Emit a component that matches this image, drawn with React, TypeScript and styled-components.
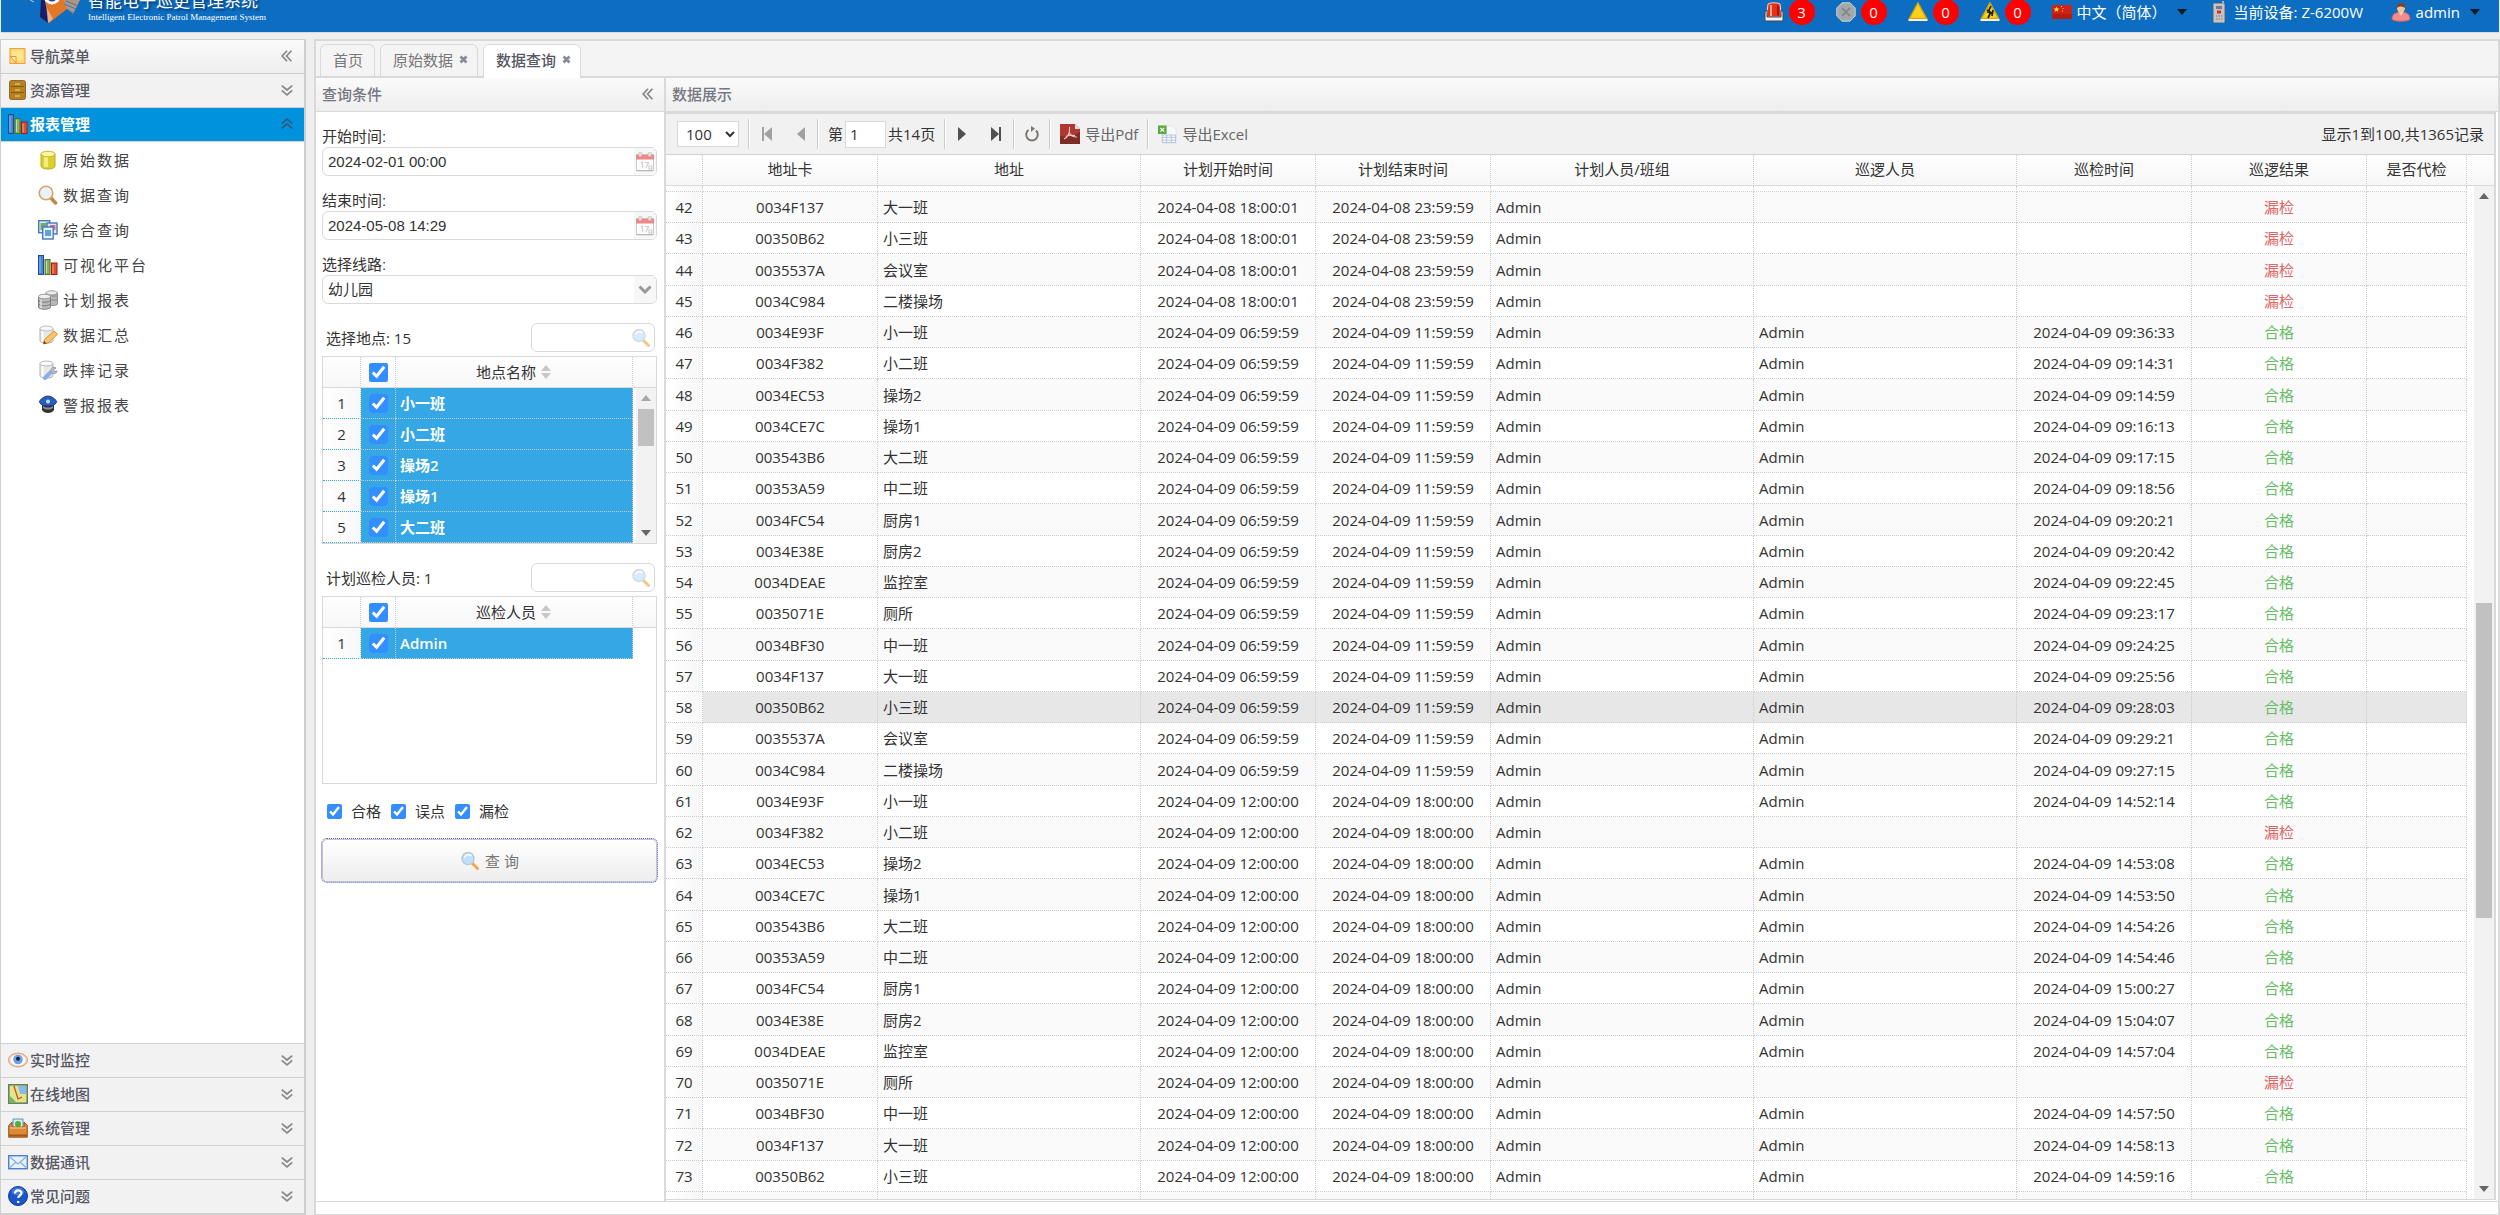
import React from 'react';
import styled, { createGlobalStyle, css } from 'styled-components';

const line = '#d9d9d9';
const dotted = '1px dotted #cccccc';

const Global = createGlobalStyle`
  * { box-sizing: border-box; }
  html, body, #root { height: 100%; margin: 0; }
  body, button, input, select, table {
    font-family: "Open Sans", "Noto Sans CJK SC", sans-serif;
    font-size: 15px;
    line-height: 20px;
    color: #333333;
  }
  body { overflow: hidden; background: #efefef; }
  button { padding: 0; border: 0; background: none; cursor: pointer; }
  svg { display: block; flex: none; }
`;

/* ---------- icons ---------- */

type IconProps = { size?: number };

const Svg = ({ size = 20, children }: IconProps & { children: React.ReactNode }) => (
  <svg width={size} height={size} viewBox="0 0 20 20" fill="none" aria-hidden="true">{children}</svg>
);

const NoteIcon = () => (
  <Svg>
    <rect x="2" y="2.500" width="15" height="15" fill="#fbd878" stroke="#f0a040" />
    <path d="M4 4.500h11v10H9L4 9z" fill="#fde68c" />
    <path d="M2.500 10.500h5.500v6.500z" fill="#fff3c4" stroke="#f09030" />
  </Svg>
);
const CabinetIcon = () => (
  <Svg>
    <rect x="1.500" y="0.500" width="16" height="19" rx="2" fill="#b9801e" stroke="#8a6a3a" />
    <path d="M3 6.500h13M3 12.500h13" stroke="#8a5a10" />
    <path d="M7 4h5M7 10h5M7 16h5" stroke="#e0b860" strokeWidth="1.500" />
  </Svg>
);
const BarsIcon = () => (
  <Svg>
    <rect x="0.500" y="0.500" width="5" height="19" fill="#4a86d0" stroke="#1e4c96" />
    <rect x="7" y="4.500" width="5" height="15" fill="#8cb060" stroke="#4c7424" />
    <rect x="13.500" y="8" width="5.500" height="11.500" fill="#e05030" stroke="#a41c10" />
    <path d="M2 2v16" stroke="#8ab8f0" /><path d="M8.500 6v12" stroke="#c4dc9c" /><path d="M15 9.500v9" stroke="#f4a080" />
  </Svg>
);
const CylinderIcon = () => (
  <Svg>
    <path d="M3 4v12c0 4 14 4 14 0V4z" fill="#dcd02c" stroke="#b8ac20" />
    <path d="M6 6h4v11H6z" fill="#f2ec80" />
    <ellipse cx="10" cy="4" rx="7" ry="2.800" fill="#f8f4a8" stroke="#c4b830" />
  </Svg>
);
const BrownGlassIcon = () => (
  <Svg>
    <path d="M12 12l5.500 6" stroke="#c08848" strokeWidth="3.500" strokeLinecap="round" />
    <circle cx="8" cy="8" r="6.800" fill="#e8f2fc" stroke="#d8a468" strokeWidth="1.600" />
  </Svg>
);
const WindowsIcon = () => (
  <Svg>
    <rect x="0.700" y="0.700" width="11" height="12" fill="#dce8f8" stroke="#4c78b8" strokeWidth="1.400" />
    <rect x="2.500" y="3" width="6" height="7" fill="#6cae60" />
    <rect x="9" y="3" width="10" height="11" fill="#dce8f8" stroke="#4c78b8" strokeWidth="1.400" />
    <rect x="12" y="5" width="5.500" height="5" fill="#d87078" />
    <rect x="4.700" y="7" width="10.500" height="12" fill="#e8f2fc" stroke="#4c78b8" strokeWidth="1.400" />
    <rect x="7" y="10" width="6" height="6" fill="#58a4dc" />
  </Svg>
);
const ServersIcon = () => (
  <Svg>
    <path d="M8 3v11c0 2 11.500 2 11.500 0V3z" fill="#b8b8b8" stroke="#909090" />
    <ellipse cx="13.700" cy="2.800" rx="5.700" ry="2" fill="#ececec" stroke="#a0a0a0" />
    <path d="M13 6h6M13 10h6" stroke="#888888" />
    <path d="M0.500 7v10c0 3 12 3 12 0V7z" fill="#bcbcbc" stroke="#808080" />
    <ellipse cx="6.500" cy="6.500" rx="6" ry="2.300" fill="#f0f0f0" stroke="#999999" />
    <path d="M.5 10c0 3 12 3 12 0M.5 13.500c0 3 12 3 12 0" stroke="#777777" />
    <path d="M3 10v8" stroke="#ffffff" />
  </Svg>
);
const PaleCylinder = () => (
  <>
    <path d="M2 3.500v12c0 3.500 13 3.500 13 0v-12z" fill="#e8e8e8" stroke="#b0b0b0" />
    <path d="M4.500 5v12" stroke="#ffffff" strokeWidth="2" />
    <ellipse cx="8.500" cy="3.500" rx="6.500" ry="2.500" fill="#f8f8f8" stroke="#bbbbbb" />
  </>
);
const PencilIcon = () => (
  <Svg>
    <PaleCylinder />
    <path d="M5.500 19l1-4.500L16 6l3.500 3.200L10 18z" fill="#f8c868" stroke="#d89030" />
    <path d="M5.500 19l.6-3 2.500 2.400z" fill="#604020" />
  </Svg>
);
const WrenchIcon = () => (
  <Svg>
    <PaleCylinder />
    <path d="M7 18l6-6" stroke="#8ab0e8" strokeWidth="4" strokeLinecap="round" />
    <path d="M13 12c-1-4 3-6 5-4l-2.500 1.500 1 2L19 11c-.5 3-3.500 3.500-6 1z" fill="#b8c0c8" stroke="#9098a0" />
  </Svg>
);
const PoliceIcon = () => (
  <Svg>
    <path d="M4 10h12v5c-2 4-10 4-12 0z" fill="#303030" />
    <path d="M5 11c2 2 8 2 10 0v2c-3 2-7 2-10 0z" fill="#909090" />
    <path d="M10 1c4 .5 8 3 8.500 6-1 3-4 4-8.500 4S2.500 10 1.500 7C2 4 6 1.500 10 1z" fill="#2c5cb8" stroke="#1c3c88" />
    <circle cx="10" cy="6.500" r="2" fill="#b8e0ff" />
  </Svg>
);
const EyeIcon = () => (
  <Svg>
    <ellipse cx="10" cy="10" rx="9.500" ry="7" fill="#f2d4bc" stroke="#d8a078" />
    <ellipse cx="10" cy="10" rx="7.500" ry="5.200" fill="#ffffff" />
    <circle cx="10" cy="9.500" r="4.800" fill="#6ca0e8" />
    <circle cx="10" cy="8.800" r="2" fill="#102040" />
  </Svg>
);
const MapIcon = () => (
  <Svg>
    <rect x="0.800" y="0.800" width="18.400" height="18.400" fill="#d8e890" stroke="#60785c" strokeWidth="1.500" />
    <path d="M10 2h8v8h-6z" fill="#88b8f0" /><path d="M2 12l6 6H2z" fill="#70b850" />
    <path d="M4 3l8 14 6-6M2 8l8 1 5 9" stroke="#f0e070" strokeWidth="1.500" />
    <path d="M6 2l4 13 4-2" stroke="#d04030" strokeWidth="1.200" />
  </Svg>
);
const ToolboxIcon = () => (
  <Svg>
    <path d="M5 1h10v9H5z" fill="#d0e8f8" stroke="#6890b0" /><circle cx="10" cy="6" r="3" fill="#50b030" />
    <path d="M.7 7.500L4 4v5h12V4l3.300 3.500v11.700H.7z" fill="#e08838" stroke="#94541c" />
    <path d="M2 10h16" stroke="#f4b878" strokeWidth="1.500" /><path d="M1 17.500h18" stroke="#a05818" strokeWidth="2" />
  </Svg>
);
const MailIcon = () => (
  <Svg>
    <rect x="0.700" y="3.700" width="18.600" height="13" fill="#e8f2fc" stroke="#4c80c8" strokeWidth="1.400" />
    <path d="M2 5l8 7 8-7M2 15.500l5.500-5M18 15.500l-5.500-5" stroke="#88b0e0" strokeWidth="1.300" />
  </Svg>
);
const HelpIcon = () => (
  <Svg>
    <circle cx="10" cy="10" r="9.500" fill="#1a56c8" stroke="#0c389c" />
    <ellipse cx="10" cy="5.500" rx="6.500" ry="4" fill="#5a90e8" opacity=".6" />
    <path d="M7 7.500c0-4 6.500-4 6.500-.5 0 2.500-3.300 2.500-3.300 5M10.200 15v2" stroke="#ffffff" strokeWidth="2.200" />
  </Svg>
);
const GlassIcon = () => (
  <Svg>
    <path d="M12 12l5.500 5.500" stroke="#eda850" strokeWidth="3" strokeLinecap="round" />
    <circle cx="8" cy="7.500" r="6" fill="#bfe0fa" stroke="#c0c8d4" strokeWidth="1.500" />
    <path d="M4.500 6.500c1-3 5-3.500 7-1.500" stroke="#ffffff" strokeWidth="1.500" />
  </Svg>
);
const CalendarIcon = () => (
  <Svg>
    <rect x="1.500" y="3" width="17" height="16" rx="1" fill="#fbfbfb" stroke="#cccccc" />
    <path d="M1 2.500h18v5H1z" fill="#f08888" />
    <rect x="3.500" y="0.500" width="3.500" height="4" rx="1.500" fill="#e4e4e4" stroke="#b8b8b8" strokeWidth=".7" />
    <rect x="13" y="0.500" width="3.500" height="4" rx="1.500" fill="#e4e4e4" stroke="#b8b8b8" strokeWidth=".7" />
    <path d="M6 11l1.500-1v6M9.500 10.500h4L11 16M14 14h3v3h-3z" stroke="#cfcfcf" strokeWidth="1.100" />
    <path d="M1.500 18.500h17" stroke="#b8b8b8" />
  </Svg>
);
const SirenIcon = () => (
  <Svg>
    <path d="M4 2C6 .4 14 .4 16 2l1.500 13h-15z" fill="#e83018" stroke="#f0d8d0" />
    <path d="M7 3v11" stroke="#ffa890" strokeWidth="2" /><path d="M14 3.500v10" stroke="#a81408" strokeWidth="2" />
    <path d="M1 10l2-2v7h14V8l2 2v9H1z" fill="#f4f4f4" stroke="#404850" />
  </Svg>
);
const OctagonIcon = () => (
  <Svg>
    <path d="M6 .8h8L19.200 6v8L14 19.200H6L.8 14V6z" fill="#a4a8a8" stroke="#d0d4d4" />
    <path d="M6 6l8 8M14 6l-8 8" stroke="#84888c" strokeWidth="1.800" />
  </Svg>
);
const WarnIcon = ({ spark }: { spark?: boolean }) => (
  <Svg>
    <path d="M10 1l8.500 15.500h-17z" fill="#fcd01c" stroke="#d8a808" strokeWidth="1.500" />
    <path d="M.5 17h19v2H.5z" fill="#f4f0dc" />
    {spark && <path d="M11 4l-3 6 2.500 1L8 16M7 8l6 4M13 8l-1 6" stroke="#202020" strokeWidth="1.700" />}
  </Svg>
);
const FlagIcon = () => (
  <svg width="20" height="14" viewBox="0 0 20 14" aria-hidden="true">
    <rect width="20" height="14" fill="#cc2218" /><rect y="9" width="20" height="5" fill="#b41c12" />
    <path d="M4.500 1.500l.8 2 2.200.1-1.700 1.300.6 2.100-1.900-1.200L2.600 7l.6-2.100L1.500 3.600l2.200-.1z" fill="#ffd830" />
    <path d="M9 1h1v1H9zM10.500 3h1v1h-1zM10 5.500h1v1h-1z" fill="#ffd830" />
  </svg>
);
const PhoneIcon = () => (
  <svg width="12" height="22" viewBox="0 0 12 22" aria-hidden="true">
    <path d="M9 0h2v4H9z" fill="#b8b0b0" />
    <rect x=".5" y="2.500" width="11" height="19" rx="1" fill="#c8c4c4" stroke="#989494" />
    <rect x="3" y="5" width="6" height="3" fill="#707c88" />
    <rect x="4" y="9.500" width="4" height="3" fill="#e02828" />
    <path d="M3 15h1.500M5.500 15H7M8 15h1.500M3 18h1.500M5.500 18H7M8 18h1.500" stroke="#807c7c" />
  </svg>
);
const UserIcon = () => (
  <Svg>
    <path d="M1 17c0-5 4-7 9-7s9 2 9 7c0 3-18 3-18 0z" fill="#f08c90" stroke="#d06068" />
    <path d="M7 9h6l-3 5z" fill="#f8d0a8" />
    <circle cx="10" cy="6" r="4" fill="#f4c494" />
    <path d="M5.700 6C5 0 15-1 14.300 6 12 5 10 3 5.700 6z" fill="#7c4424" />
  </Svg>
);
const PdfIcon = () => (
  <Svg>
    <path d="M0 0h15l5 5v15H0z" fill="#b0382e" /><path d="M0 12c8 2 14 0 20-4v12H0z" fill="#7c2c24" />
    <path d="M15 0v5h5z" fill="#e8dcdc" />
    <path d="M4 15c4-2 6-7 5.500-12M9.500 9c1 2.500 4 4 7.500 4M6 12.500c3-1.500 6-1.500 9-1" stroke="#ecc8c4" strokeWidth="1.100" />
  </Svg>
);
const ExcelIcon = () => (
  <Svg size={19}>
    <path d="M9 1h6l4 4v14H5V9h4z" fill="#f8f9fb" stroke="#e2e6ea" />
    <rect x="0" y="0.500" width="9" height="9" fill="#5ca83c" />
    <path d="M2.500 3l4 4M6.500 3l-4 4" stroke="#ffffff" strokeWidth="1.300" />
    <path d="M4.500 10.500h14v8h-14zM4.500 13h14M4.500 16h14M9 10.500v8M14 10.500v8" stroke="#b4c4d8" />
  </Svg>
);
const RefreshIcon = () => (
  <svg width="16" height="16" viewBox="0 0 16 16" fill="none" aria-hidden="true">
    <path d="M4.500 4A5.800 5.800 0 1 0 12 4.500" stroke="#807470" strokeWidth="2" />
    <path d="M7 0v6l4-3.500z" fill="#807470" />
  </svg>
);
const ChevronsIcon = ({ dir, color = '#888888' }: { dir: 'left' | 'down' | 'up'; color?: string }) => {
  const paths = {
    left: 'M8 2L2.500 8 8 14M13 2L7.500 8 13 14',
    down: 'M2 3l6 5 6-5M2 8.500l6 5 6-5',
    up: 'M2 7.500l6-5 6 5M2 13l6-5 6 5',
  };
  return (
    <svg width="14" height="14" viewBox="0 0 16 16" fill="none" aria-hidden="true">
      <path d={paths[dir]} stroke={color} strokeWidth="2" />
    </svg>
  );
};
const Triangle = ({ up, color = '#666666' }: { up?: boolean; color?: string }) => (
  <svg width="10" height="6" viewBox="0 0 10 6" aria-hidden="true">
    <path d={up ? 'M0 6L5 0l5 6z' : 'M0 0h10L5 6z'} fill={color} />
  </svg>
);
const PageArrow = ({ dir, bar, color }: { dir: 'left' | 'right'; bar?: boolean; color: string }) => (
  <svg width="12" height="14" viewBox="0 0 12 14" aria-hidden="true">
    {dir === 'left' ? <path d="M11 0v14L3 7z" fill={color} /> : <path d="M1 0v14l8-7z" fill={color} />}
    {bar && <rect x={dir === 'left' ? 1 : 9} y="0" width="2" height="14" fill={color} />}
  </svg>
);
const SortIcon = () => (
  <svg width="12" height="14" viewBox="0 0 12 14" aria-hidden="true">
    <path d="M1 6l5-6 5 6zM1 8h10l-5 6z" fill="#c8c8c8" />
  </svg>
);
const CloseIcon = () => (
  <svg width="9" height="9" viewBox="0 0 9 9" aria-hidden="true">
    <path d="M1.500 1.500l6 6M7.500 1.500l-6 6" stroke="#888c98" strokeWidth="2.800" />
  </svg>
);
const LogoIcon = () => (
  <svg width="58" height="24" viewBox="0 0 58 24" aria-hidden="true">
    <path d="M17 0h4l3 23-8-6z" fill="#1c1c68" />
    <path d="M21 0h24l3 5-23 18z" fill="#e07828" />
    <path d="M23 8l1 15 5-4z" fill="#f4b080" />
    <path d="M40 0l16 0-7 14-7-6z" fill="#b09480" />
    <path d="M42 1l12 5M40 4l12 5M44 10l5 3" stroke="#3a7cc0" />
    <circle cx="28" cy="-4" r="7" fill="#3c3c8c" stroke="#ffffff" strokeWidth="3" />
    <path d="M6 0l4 2" stroke="#b8d0e8" />
  </svg>
);

/* ---------- shell ---------- */

const Shell = styled.div`
  display: flex;
  flex-direction: column;
  height: 100vh;
  min-width: 1280px;
`;
const TopBar = styled.header`
  display: flex;
  justify-content: space-between;
  height: 33px;
  flex: none;
  margin: 0 1px 6px;
  padding: 0 19px 0 23px;
  overflow: hidden;
  background: #0d6dc1;
  border-bottom: 1px solid ${line};
  color: #ffffff;
`;
const Brand = styled.div`
  display: flex;
  align-items: flex-start;
  gap: 6px;
`;
const BrandText = styled.div`
  display: flex;
  flex-direction: column;
  justify-content: flex-end;
  height: 23px;
`;
const BrandTitle = styled.strong`
  font-size: 17px;
  line-height: 20px;
  font-weight: 400;
  text-shadow: 2px 2px 2px #0a3c70;
`;
const BrandSub = styled.span`
  font-family: "Liberation Serif", serif;
  font-size: 9px;
  line-height: 12px;
`;
const Status = styled.div`
  display: flex;
  align-items: center;
  gap: 21px;
  height: 24px;
`;
const StatusButton = styled.button<{ $gap: number; $lead?: number; $width?: number }>`
  display: flex;
  align-items: center;
  gap: ${p => p.$gap}px;
  min-width: ${p => p.$width ?? 0}px;
  margin-left: ${p => p.$lead ?? 0}px;
  color: #ffffff;
  white-space: nowrap;
`;
const CountBadge = styled.span`
  width: 26px;
  height: 26px;
  border-radius: 13px;
  background: #ff0000;
  line-height: 26px;
  text-align: center;
`;
const Body = styled.div`
  display: flex;
  flex: 1;
  min-height: 0;
  gap: 8px;
`;

/* ---------- navigation ---------- */

const Nav = styled.nav`
  display: flex;
  flex-direction: column;
  width: 306px;
  flex: none;
  border: 1px solid #cfcfcf;
  border-right-width: 2px;
  background: #ffffff;
`;
const navLine = css`
  display: flex;
  align-items: center;
  gap: 2px;
  width: 100%;
  height: 34px;
  flex: none;
  padding: 0 10px 2px 7px;
  border-bottom: 1px solid #cfcfcf;
  color: #575765;
  font-weight: 500;
  text-align: left;
`;
const NavTitle = styled.div`
  ${navLine}
  background: linear-gradient(#fafafa, #eeeeee);
`;
const NavSection = styled.button<{ $open?: boolean }>`
  ${navLine}
  background: ${p => (p.$open ? '#0092dc' : '#f2f2f2')};
  ${p => p.$open && css`color: #ffffff; font-weight: 700;`}
`;
const Grow = styled.span`
  flex: 1;
`;
const NavList = styled.ul`
  flex: 1;
  margin: 0;
  padding: 0;
  border-bottom: 1px solid #cfcfcf;
  list-style: none;
`;
const NavLink = styled.a`
  display: flex;
  align-items: center;
  gap: 5px;
  height: 35px;
  padding-left: 37px;
  color: #444444;
  letter-spacing: 2px;
  text-decoration: none;
`;

/* ---------- workspace ---------- */

const Workspace = styled.main`
  display: flex;
  flex-direction: column;
  flex: 1;
  min-width: 0;
  padding-bottom: 12px;
  border: 2px solid ${line};
  border-bottom-width: 1px;
  background: #ffffff;
`;
const TabBar = styled.div`
  display: flex;
  align-items: flex-start;
  gap: 5px;
  height: 37px;
  flex: none;
  padding: 3px 4px 0;
  border-bottom: 2px solid ${line};
  background: #f4f4f4;
`;
const Tab = styled.div<{ $active?: boolean }>`
  display: flex;
  align-items: center;
  gap: 4px;
  height: ${p => (p.$active ? 34 : 32)}px;
  padding: 0 9px ${p => (p.$active ? 4 : 2)}px 11px;
  border: 1px solid ${line};
  border-bottom: 0;
  border-radius: 6px 6px 0 0;
  background: ${p => (p.$active ? '#ffffff' : '#f4f4f4')};
`;
const TabButton = styled.button<{ $active?: boolean }>`
  padding: 0 2px 0 1px;
  color: ${p => (p.$active ? '#575765' : '#777777')};
  font-weight: ${p => (p.$active ? 500 : 400)};
`;
const Split = styled.div`
  display: flex;
  flex: 1;
  min-height: 0;
  border-bottom: 1px solid ${line};
`;
const PanelTitle = styled.h2`
  display: flex;
  align-items: center;
  justify-content: space-between;
  height: 34px;
  flex: none;
  margin: 0;
  padding: 0 9px 2px 6px;
  border-bottom: 1px solid ${line};
  background: linear-gradient(#fafafa, #eeeeee);
  color: #777783;
  font-size: 15px;
  font-weight: 500;
`;

/* ---------- query panel ---------- */

const QueryPanel = styled.section`
  width: 350px;
  flex: none;
  border-right: 2px solid ${line};
`;
const QueryForm = styled.form`
  display: flex;
  flex-direction: column;
  padding: 0 7px 0 6px;
`;
const Field = styled.div`
  display: flex;
  flex-direction: column;
  height: 49px;
  margin-top: 15px;
`;
const FieldLabel = styled.label`
  font-family: "Liberation Sans", "Noto Sans CJK SC", sans-serif;
`;
const Box = styled.div<{ $width?: number }>`
  display: flex;
  align-items: stretch;
  height: 29px;
  width: ${p => (p.$width ? `${p.$width}px` : 'auto')};
  overflow: hidden;
  border: 1px solid ${line};
  border-radius: 6px;
  background: #ffffff;
`;
const plainInput = css`
  flex: 1;
  min-width: 0;
  padding: 0 5px;
  border: 0;
  outline: 0;
  background: none;
  font-family: "Liberation Sans", "Noto Sans CJK SC", sans-serif;
`;
const TextInput = styled.input`
  && { ${plainInput} }
`;
const BoxButton = styled.button<{ $plain?: boolean }>`
  display: flex;
  align-items: center;
  justify-content: center;
  width: ${p => (p.$plain ? 26 : 22)}px;
  flex: none;
  background: ${p => (p.$plain ? 'none' : '#f7f7f7')};

  svg { opacity: ${p => (p.$plain ? 0.65 : 1)}; }
`;
const RouteBox = styled.div`
  display: grid;
  grid-template-columns: 1fr 22px;
  height: 29px;
  overflow: hidden;
  border: 1px solid ${line};
  border-radius: 6px;

  > * { grid-row: 1; }
`;
const RouteSelect = styled.select`
  && { ${plainInput} }
  grid-column: 1 / 3;
  appearance: none;
`;
const RouteArrow = styled.span`
  grid-column: 2;
  display: flex;
  align-items: center;
  justify-content: center;
  background: #f7f7f7;
  pointer-events: none;
`;
const PickHead = styled.div`
  display: flex;
  align-items: center;
  justify-content: space-between;
  margin: 19px 2px 4px 4px;
`;
const PickFrame = styled.div`
  display: flex;
  height: 188px;
  overflow: hidden;
  border: 1px solid ${line};
`;
const PickTable = styled.table`
  width: 310px;
  flex: none;
  align-self: flex-start;
  table-layout: fixed;
  border-collapse: separate;
  border-spacing: 0;

  th, td {
    height: 31px;
    padding: 0;
    border-right: ${dotted};
    text-align: center;
    font-weight: 400;
  }
  thead th {
    border-bottom: 1px solid ${line};
    background: linear-gradient(#fefefe, #f7f7f7);
  }
  tbody th {
    border-bottom: 1px dotted #34a7e4;
    background: linear-gradient(90deg, #ffffff, #f8f8f8);
  }
  tbody td {
    border-bottom: ${dotted};
    background: #34a7e4;
    color: #ffffff;
    font-weight: 600;
  }
  tbody td:last-child { padding-left: 4px; text-align: left; }
`;
const SortHead = styled.span`
  display: flex;
  align-items: center;
  justify-content: center;
  gap: 4px;
`;
const Check = styled.input<{ $size: number }>`
  display: block;
  width: ${p => p.$size}px;
  height: ${p => p.$size}px;
  margin: 0 auto;
  accent-color: #338fff;
`;
const ResultRow = styled.div`
  display: flex;
  gap: 10px;
  margin: 17px 0 17px 5px;
`;
const ResultLabel = styled.label`
  display: flex;
  align-items: center;
  gap: 9px;
  height: 20px;
`;
const SearchButton = styled.button`
  display: flex;
  align-items: center;
  justify-content: center;
  gap: 5px;
  height: 45px;
  margin: 0 -1px;
  border: 1px dotted #5c5ce0;
  border-radius: 6px;
  background: linear-gradient(#ffffff, #ededed);
  box-shadow: inset 0 0 0 1px #c4c4cc;
  color: #777777;
`;

/* ---------- scroll bar ---------- */

const Rail = styled.div`
  display: flex;
  flex-direction: column;
  width: 20px;
  flex: 1;
  min-height: 0;
  margin-left: auto;
  background: #f2f2f2;
`;
const RailEnd = styled.button`
  display: flex;
  align-items: center;
  justify-content: center;
  height: 20px;
  flex: none;
`;
const RailSpace = styled.div<{ $share: number }>`
  flex: ${p => p.$share} 1 0;
`;
const RailThumb = styled(RailSpace)`
  margin: 0 2px;
  background: #c1c1c1;
`;
const RailSide = styled.div`
  display: flex;
  flex-direction: column;
  flex: 1;
  min-width: 23px;
`;
const RailHead = styled.div`
  height: 31px;
  flex: none;
  border-bottom: 1px solid ${line};
  background: linear-gradient(#fefefe, #f7f7f7);
`;

const ScrollRail = ({ before, thumb, after, atTop }: { before: number; thumb: number; after: number; atTop?: boolean }) => (
  <Rail>
    <RailEnd type="button" aria-label="向上滚动"><Triangle up color={atTop ? '#a8a8a8' : '#666666'} /></RailEnd>
    <RailSpace $share={before} />
    <RailThumb $share={thumb} />
    <RailSpace $share={after} />
    <RailEnd type="button" aria-label="向下滚动"><Triangle /></RailEnd>
  </Rail>
);

/* ---------- data grid ---------- */

const DataPanel = styled.section`
  display: flex;
  flex-direction: column;
  flex: 1;
  min-width: 0;
`;
const Grid = styled.div`
  display: flex;
  flex-direction: column;
  flex: 1;
  min-height: 0;
  margin: 0 2px 1px 0;
  border: 2px solid ${line};
  border-width: 2px 2px 1px 0;
`;
const Toolbar = styled.div`
  display: flex;
  align-items: center;
  height: 41px;
  flex: none;
  padding: 0 10px 0 11px;
  border-bottom: 1px solid #d0d0d0;
  background: #f1f1f1;
`;
const PageSize = styled.select`
  width: 62px;
  height: 26px;
  padding: 0 4px;
  border: 1px solid ${line};
  background: #ffffff;
`;
const Divider = styled.span`
  width: 2px;
  height: 30px;
  margin: 0 9px;
  border-left: 1px solid #cccccc;
  border-right: 1px solid #ffffff;
`;
const ArrowPair = styled.div`
  display: flex;
  gap: 17px;
`;
const ToolButton = styled.button<{ $width?: number }>`
  display: flex;
  align-items: center;
  justify-content: center;
  gap: 5px;
  width: ${p => (p.$width ? `${p.$width}px` : 'auto')};
  height: 30px;
  color: #666666;
  white-space: nowrap;
`;
const PageLabel = styled.label`
  display: flex;
  align-items: center;
  gap: 2px;
`;
const PageInput = styled.input`
  width: 41px;
  height: 27px;
  padding: 0 4px;
  border: 1px solid ${line};
`;
const GridBody = styled.div`
  display: flex;
  flex: 1;
  min-height: 0;
  overflow: hidden;
`;
const GridSide = styled.div`
  display: flex;
  flex-direction: column;
  width: 27px;
  flex: none;
`;
const DataTable = styled.table`
  flex: 1;
  align-self: flex-start;
  min-width: 0;
  width: 100%;
  table-layout: fixed;
  border-collapse: separate;
  border-spacing: 0;
  white-space: nowrap;

  th, td {
    height: 31px;
    padding: 0;
    overflow: hidden;
    border-right: ${dotted};
    font-weight: 400;
    text-align: center;
  }
  thead th {
    padding-bottom: 2px;
    border-bottom: 1px solid ${line};
    background: linear-gradient(#fefefe, #f7f7f7);
  }
  tbody th, tbody td { border-bottom: ${dotted}; }
  tbody th { background: linear-gradient(90deg, #ffffff, #f7f7f7); }
  tbody tr:nth-child(4n) > * { height: 32px; }
`;
const Row = styled.tr<{ $alt?: boolean; $hover?: boolean }>`
  background: ${p => (p.$hover ? '#e7e7e7' : p.$alt ? '#fafafa' : '#ffffff')};
`;
const EdgeRow = styled(Row)`
  && > * { height: 6px; }
`;
const LeftCell = styled.td`
  && { padding-left: 5px; text-align: left; }
`;
const ResultCell = styled.td<{ $ok: boolean }>`
  color: ${p => (p.$ok ? '#68bd68' : '#e06666')};
`;

/* ---------- data ---------- */

const places: [string, string][] = [
  ['0034E93F', '小一班'], ['0034F382', '小二班'], ['0034EC53', '操场2'], ['0034CE7C', '操场1'],
  ['003543B6', '大二班'], ['00353A59', '中二班'], ['0034FC54', '厨房1'], ['0034E38E', '厨房2'],
  ['0034DEAE', '监控室'], ['0035071E', '厕所'], ['0034BF30', '中一班'], ['0034F137', '大一班'],
  ['00350B62', '小三班'], ['0035537A', '会议室'], ['0034C984', '二楼操场'],
];

const visits: string[] = [
  '', '', '', '',
  '09:36:33', '09:14:31', '09:14:59', '09:16:13', '09:17:15', '09:18:56', '09:20:21', '09:20:42',
  '09:22:45', '09:23:17', '09:24:25', '09:25:56', '09:28:03', '09:29:21', '09:27:15',
  '14:52:14', '', '14:53:08', '14:53:50', '14:54:26', '14:54:46', '15:00:27', '15:04:07',
  '14:57:04', '', '14:57:50', '14:58:13', '14:59:16',
];

const records = visits.map((time, i) => {
  const no = 42 + i;
  const [card, place] = places[(no - 31) % 15];
  const [start, end] =
    no < 46 ? ['2024-04-08 18:00:01', '2024-04-08 23:59:59']
      : no < 61 ? ['2024-04-09 06:59:59', '2024-04-09 11:59:59']
        : ['2024-04-09 12:00:00', '2024-04-09 18:00:00'];
  return { no, card, place, start, end, time };
});

const columns: [string, number][] = [
  ['', 37], ['地址卡', 175], ['地址', 263], ['计划开始时间', 175], ['计划结束时间', 175], ['计划人员/班组', 263],
  ['巡逻人员', 263], ['巡检时间', 175], ['巡逻结果', 175], ['是否代检', 100],
];

const menu: [string, React.ReactNode][] = [
  ['原始数据', <CylinderIcon />], ['数据查询', <BrownGlassIcon />], ['综合查询', <WindowsIcon />],
  ['可视化平台', <BarsIcon />], ['计划报表', <ServersIcon />], ['数据汇总', <PencilIcon />],
  ['跌摔记录', <WrenchIcon />], ['警报报表', <PoliceIcon />],
];

const lowerSections: [string, React.ReactNode][] = [
  ['实时监控', <EyeIcon />], ['在线地图', <MapIcon />], ['系统管理', <ToolboxIcon />],
  ['数据通讯', <MailIcon />], ['常见问题', <HelpIcon />],
];

const alerts: [string, React.ReactNode, number][] = [
  ['紧急报警', <SirenIcon />, 3], ['设备故障', <OctagonIcon />, 0], ['警告', <WarnIcon />, 0], ['跌摔', <WarnIcon spark />, 0],
];

const PickList = ({ title, rows, scroll }: { title: string; rows: string[]; scroll?: boolean }) => (
  <PickFrame>
    <PickTable>
      <colgroup><col style={{ width: 38 }} /><col style={{ width: 35 }} /><col /></colgroup>
      <thead>
        <tr>
          <th />
          <th><Check $size={19} type="checkbox" defaultChecked aria-label="全选" /></th>
          <th><SortHead>{title}<SortIcon /></SortHead></th>
        </tr>
      </thead>
      <tbody>
        {rows.map((name, i) => (
          <tr key={name}>
            <th scope="row">{i + 1}</th>
            <td><Check $size={19} type="checkbox" defaultChecked aria-label={name} /></td>
            <td>{name}</td>
          </tr>
        ))}
      </tbody>
    </PickTable>
    <RailSide>
      <RailHead />
      {scroll && <ScrollRail before={1} thumb={37} after={77} atTop />}
    </RailSide>
  </PickFrame>
);

export default function App() {
  return (
    <Shell>
      <Global />
      <TopBar>
        <Brand>
          <LogoIcon />
          <BrandText>
            <BrandTitle>智能电子巡更管理系统</BrandTitle>
            <BrandSub>Intelligent Electronic Patrol Management System</BrandSub>
          </BrandText>
        </Brand>
        <Status>
          {alerts.map(([name, icon, count]) => (
            <StatusButton $gap={5} key={name} type="button" aria-label={name}>
              {icon}<CountBadge>{count}</CountBadge>
            </StatusButton>
          ))}
          <StatusButton $gap={5} $width={135} type="button">
            <FlagIcon />中文（简体）<Grow /><Triangle color="#101820" />
          </StatusButton>
          <StatusButton $gap={9} $lead={5} $width={155} type="button"><PhoneIcon />当前设备: Z-6200W</StatusButton>
          <StatusButton $gap={5} $lead={2} $width={89} type="button">
            <UserIcon />admin<Grow /><Triangle color="#101820" />
          </StatusButton>
        </Status>
      </TopBar>

      <Body>
        <Nav>
          <NavTitle><NoteIcon />导航菜单<Grow /><ChevronsIcon dir="left" /></NavTitle>
          <NavSection type="button"><CabinetIcon />资源管理<Grow /><ChevronsIcon dir="down" /></NavSection>
          <NavSection type="button" $open><BarsIcon />报表管理<Grow /><ChevronsIcon dir="up" color="#2c5c7c" /></NavSection>
          <NavList>
            {menu.map(([name, icon]) => (
              <li key={name}><NavLink href="#">{icon}{name}</NavLink></li>
            ))}
          </NavList>
          {lowerSections.map(([name, icon]) => (
            <NavSection type="button" key={name}>{icon}{name}<Grow /><ChevronsIcon dir="down" /></NavSection>
          ))}
        </Nav>

        <Workspace>
          <TabBar>
            <Tab><TabButton type="button">首页</TabButton></Tab>
            <Tab>
              <TabButton type="button">原始数据</TabButton>
              <button type="button" aria-label="关闭原始数据"><CloseIcon /></button>
            </Tab>
            <Tab $active>
              <TabButton type="button" $active>数据查询</TabButton>
              <button type="button" aria-label="关闭数据查询"><CloseIcon /></button>
            </Tab>
          </TabBar>

          <Split>
            <QueryPanel>
              <PanelTitle>查询条件<ChevronsIcon dir="left" /></PanelTitle>
              <QueryForm onSubmit={e => e.preventDefault()}>
                <Field>
                  <FieldLabel htmlFor="from">开始时间:</FieldLabel>
                  <Box>
                    <TextInput id="from" defaultValue="2024-02-01 00:00" />
                    <BoxButton type="button" aria-label="选择开始时间"><CalendarIcon /></BoxButton>
                  </Box>
                </Field>
                <Field>
                  <FieldLabel htmlFor="to">结束时间:</FieldLabel>
                  <Box>
                    <TextInput id="to" defaultValue="2024-05-08 14:29" />
                    <BoxButton type="button" aria-label="选择结束时间"><CalendarIcon /></BoxButton>
                  </Box>
                </Field>
                <Field>
                  <FieldLabel htmlFor="route">选择线路:</FieldLabel>
                  <RouteBox>
                    <RouteSelect id="route"><option>幼儿园</option></RouteSelect>
                    <RouteArrow>
                      <svg width="14" height="9" viewBox="0 0 14 9" fill="none"><path d="M1.500 1.500L7 7l5.500-5.500" stroke="#999999" strokeWidth="3" /></svg>
                    </RouteArrow>
                  </RouteBox>
                </Field>

                <PickHead>
                  <label htmlFor="place">选择地点: 15</label>
                  <Box $width={124}>
                    <TextInput id="place" />
                    <BoxButton type="button" $plain aria-label="搜索地点"><GlassIcon /></BoxButton>
                  </Box>
                </PickHead>
                <PickList title="地点名称" rows={['小一班', '小二班', '操场2', '操场1', '大二班']} scroll />

                <PickHead>
                  <label htmlFor="person">计划巡检人员: 1</label>
                  <Box $width={124}>
                    <TextInput id="person" />
                    <BoxButton type="button" $plain aria-label="搜索人员"><GlassIcon /></BoxButton>
                  </Box>
                </PickHead>
                <PickList title="巡检人员" rows={['Admin']} />

                <ResultRow>
                  {['合格', '误点', '漏检'].map(name => (
                    <ResultLabel key={name}><Check $size={15} type="checkbox" defaultChecked />{name}</ResultLabel>
                  ))}
                </ResultRow>
                <SearchButton type="submit"><GlassIcon />查 询</SearchButton>
              </QueryForm>
            </QueryPanel>

            <DataPanel>
              <PanelTitle>数据展示</PanelTitle>
              <Grid>
                <Toolbar>
                  <PageSize aria-label="每页条数"><option>100</option></PageSize>
                  <Divider />
                  <ArrowPair>
                    <ToolButton type="button" $width={16} aria-label="首页"><PageArrow dir="left" bar color="#a0a0a0" /></ToolButton>
                    <ToolButton type="button" $width={16} aria-label="上一页"><PageArrow dir="left" color="#a0a0a0" /></ToolButton>
                  </ArrowPair>
                  <Divider />
                  <PageLabel>第<PageInput defaultValue="1" />共14页</PageLabel>
                  <Divider />
                  <ArrowPair>
                    <ToolButton type="button" $width={16} aria-label="下一页"><PageArrow dir="right" color="#505050" /></ToolButton>
                    <ToolButton type="button" $width={16} aria-label="末页"><PageArrow dir="right" bar color="#505050" /></ToolButton>
                  </ArrowPair>
                  <Divider />
                  <ToolButton type="button" $width={16} aria-label="刷新"><RefreshIcon /></ToolButton>
                  <Divider />
                  <ToolButton type="button"><PdfIcon />导出Pdf</ToolButton>
                  <Divider />
                  <ToolButton type="button"><ExcelIcon />导出Excel</ToolButton>
                  <Grow />
                  <span>显示1到100,共1365记录</span>
                </Toolbar>
                <GridBody>
                  <DataTable>
                    <colgroup>{columns.map(([name, w]) => <col key={name} style={{ width: w }} />)}</colgroup>
                    <thead>
                      <tr>{columns.map(([name]) => <th key={name} scope="col">{name}</th>)}</tr>
                    </thead>
                    <tbody>
                      <EdgeRow><th />{columns.slice(1).map(([name]) => <td key={name} />)}</EdgeRow>
                      {records.map(r => (
                        <Row key={r.no} $alt={r.no % 2 === 0} $hover={r.no === 58}>
                          <th scope="row">{r.no}</th>
                          <td>{r.card}</td>
                          <LeftCell>{r.place}</LeftCell>
                          <td>{r.start}</td>
                          <td>{r.end}</td>
                          <LeftCell>Admin</LeftCell>
                          <LeftCell>{r.time && 'Admin'}</LeftCell>
                          <td>{r.time && `2024-04-09 ${r.time}`}</td>
                          <ResultCell $ok={!!r.time}>{r.time ? '合格' : '漏检'}</ResultCell>
                          <td />
                        </Row>
                      ))}
                      <Row $alt><th />{columns.slice(1).map(([name]) => <td key={name} />)}</Row>
                    </tbody>
                  </DataTable>
                  <GridSide>
                    <RailHead />
                    <ScrollRail before={397} thumb={314} after={261} />
                  </GridSide>
                </GridBody>
              </Grid>
            </DataPanel>
          </Split>
        </Workspace>
      </Body>
    </Shell>
  );
}
